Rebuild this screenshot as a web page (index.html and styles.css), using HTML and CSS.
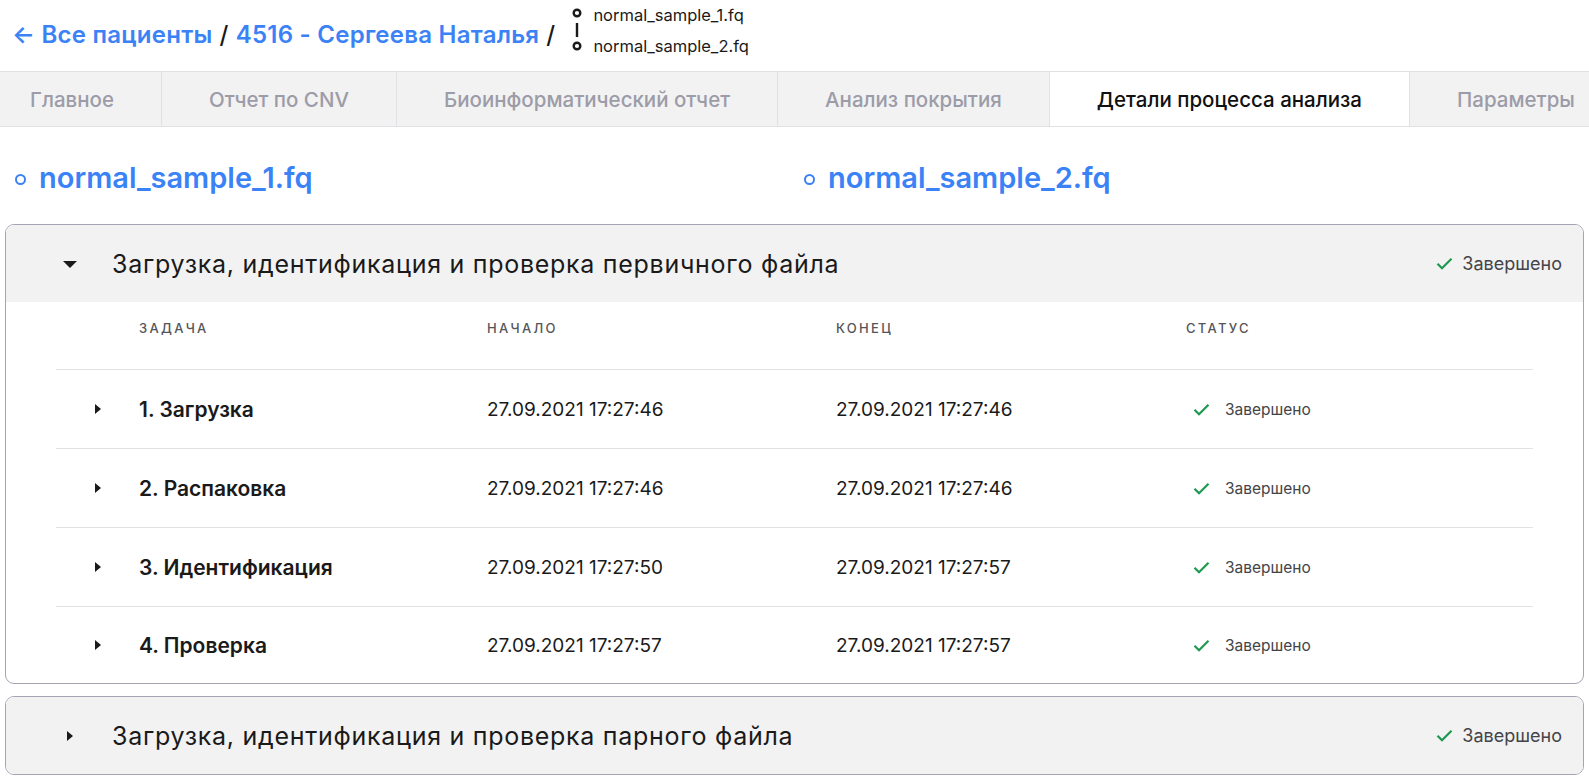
FILE: index.html
```html
<!DOCTYPE html>
<html lang="ru">
<head>
<meta charset="utf-8">
<link rel="stylesheet" href="styles.css">
</head>
<body>
<header class="topbar">
  <nav class="crumbs">
    <a class="crumb-link" href="#"><span class="arrow">←</span> Все пациенты</a>
    <span class="sep">/</span>
    <a class="crumb-link" href="#">4516 - Сергеева Наталья</a>
    <span class="sep">/</span>
  </nav>
  <div class="pair">
    <svg class="pair-icon" width="12" height="44" viewBox="0 0 12 44">
      <circle cx="6" cy="5" r="3.3" fill="none" stroke="#1a1a1a" stroke-width="2.4"/>
      <line x1="6" y1="15" x2="6" y2="29" stroke="#1a1a1a" stroke-width="2.4"/>
      <circle cx="6" cy="38" r="3.3" fill="none" stroke="#1a1a1a" stroke-width="2.4"/>
    </svg>
    <div class="pair-names">
      <span>normal_sample_1.fq</span>
      <span>normal_sample_2.fq</span>
    </div>
  </div>
</header>

<div class="tabs">
  <div class="tab first">Главное</div>
  <div class="tab">Отчет по CNV</div>
  <div class="tab">Биоинформатический отчет</div>
  <div class="tab">Анализ покрытия</div>
  <div class="tab active">Детали процесса анализа</div>
  <div class="tab">Параметры</div>
</div>

<section class="samples">
  <div class="sample"><span class="ring"></span>normal_sample_1.fq</div>
  <div class="sample"><span class="ring"></span>normal_sample_2.fq</div>
</section>

<section class="panels">
  <div class="panel">
    <div class="panel-head">
      <span class="caret-down"></span>
      <span class="panel-title">Загрузка, идентификация и проверка первичного файла</span>
      <span class="status big"><svg class="check" width="17" height="13" viewBox="0 0 17 13"><path d="M1.5 6.8l4.5 4.4L15.5 1.8" fill="none" stroke="#1f9a52" stroke-width="2.3"/></svg>Завершено</span>
    </div>
    <div class="table">
      <div class="thead">
        <div class="c-arrow"></div>
        <div class="c">Задача</div>
        <div class="c">Начало</div>
        <div class="c">Конец</div>
        <div class="c">Статус</div>
      </div>
      <div class="trow">
        <div class="c-arrow"><span class="caret-right"></span></div>
        <div class="c task">1. Загрузка</div>
        <div class="c">27.09.2021 17:27:46</div>
        <div class="c">27.09.2021 17:27:46</div>
        <div class="c status small"><svg class="check" width="17" height="13" viewBox="0 0 17 13"><path d="M1.5 6.8l4.5 4.4L15.5 1.8" fill="none" stroke="#1f9a52" stroke-width="2.3"/></svg>Завершено</div>
      </div>
      <div class="trow">
        <div class="c-arrow"><span class="caret-right"></span></div>
        <div class="c task">2. Распаковка</div>
        <div class="c">27.09.2021 17:27:46</div>
        <div class="c">27.09.2021 17:27:46</div>
        <div class="c status small"><svg class="check" width="17" height="13" viewBox="0 0 17 13"><path d="M1.5 6.8l4.5 4.4L15.5 1.8" fill="none" stroke="#1f9a52" stroke-width="2.3"/></svg>Завершено</div>
      </div>
      <div class="trow">
        <div class="c-arrow"><span class="caret-right"></span></div>
        <div class="c task">3. Идентификация</div>
        <div class="c">27.09.2021 17:27:50</div>
        <div class="c">27.09.2021 17:27:57</div>
        <div class="c status small"><svg class="check" width="17" height="13" viewBox="0 0 17 13"><path d="M1.5 6.8l4.5 4.4L15.5 1.8" fill="none" stroke="#1f9a52" stroke-width="2.3"/></svg>Завершено</div>
      </div>
      <div class="trow">
        <div class="c-arrow"><span class="caret-right"></span></div>
        <div class="c task">4. Проверка</div>
        <div class="c">27.09.2021 17:27:57</div>
        <div class="c">27.09.2021 17:27:57</div>
        <div class="c status small"><svg class="check" width="17" height="13" viewBox="0 0 17 13"><path d="M1.5 6.8l4.5 4.4L15.5 1.8" fill="none" stroke="#1f9a52" stroke-width="2.3"/></svg>Завершено</div>
      </div>
    </div>
  </div>

  <div class="panel collapsed">
    <div class="panel-head">
      <span class="caret-right head"></span>
      <span class="panel-title">Загрузка, идентификация и проверка парного файла</span>
      <span class="status big"><svg class="check" width="17" height="13" viewBox="0 0 17 13"><path d="M1.5 6.8l4.5 4.4L15.5 1.8" fill="none" stroke="#1f9a52" stroke-width="2.3"/></svg>Завершено</span>
    </div>
  </div>
</section>
</body>
</html>
```

FILE: styles.css
```css
* { box-sizing: border-box; }

html, body {
  margin: 0;
  padding: 0;
  overflow: hidden;
  background: #ffffff;
  font-family: Inter, "Noto Sans", "Liberation Sans", sans-serif;
  color: #1a1a1a;
}

.topbar {
  display: flex;
  align-items: center;
  height: 71px;
  padding-left: 12px;
  gap: 16px;
}

.crumbs {
  display: flex;
  align-items: center;
  gap: 7px;
  font-size: 24px;
  font-weight: 600;
  margin-top: -2px;
  letter-spacing: 0.25px;
}

.crumb-link {
  color: #3b82f6;
  text-decoration: none;
}

.sep { color: #1a1a1a; font-weight: 500; }

.pair {
  display: flex;
  align-items: center;
  gap: 10px;
  margin-top: -11px;
}

.pair-names {
  display: flex;
  flex-direction: column;
  gap: 11px;
  font-size: 16.5px;
  line-height: 20px;
  color: #1a1a1a;
}

.tabs {
  display: flex;
  height: 56px;
  background: #f2f2f2;
  border-top: 1px solid #e2e2e6;
  border-bottom: 1px solid #e2e2e6;
  white-space: nowrap;
  width: max-content;
}

.tab {
  display: flex;
  align-items: center;
  padding: 0 47px;
  font-size: 20.5px;
  font-weight: 500;
  color: #9c9ca8;
  border-right: 1px solid #e2e2e6;
  flex: none;
}

.tab.first { padding-left: 30px; }

.tab.active {
  background: #ffffff;
  color: #111111;
}

.samples {
  display: grid;
  grid-template-columns: 789px 1fr;
  padding: 31px 0 26px 15px;
}

.sample {
  display: flex;
  align-items: center;
  gap: 13px;
  font-size: 29px;
  font-weight: 600;
  color: #3b82f6;
  line-height: 40px;
}

.ring {
  width: 11px;
  height: 11px;
  border: 2.5px solid #3b82f6;
  border-radius: 50%;
  flex: none;
  margin-top: 2px;
}

.panels {
  display: flex;
  flex-direction: column;
  gap: 12px;
  padding: 0 5px;
}

.panel {
  border: 1px solid #a4a4b4;
  border-radius: 9px;
  overflow: hidden;
}

.panel-head {
  display: flex;
  align-items: center;
  height: 77px;
  background: #f2f2f2;
  padding: 0 21px 0 57px;
}

.caret-down {
  width: 0;
  height: 0;
  border-left: 7px solid transparent;
  border-right: 7px solid transparent;
  border-top: 7px solid #1a1a1a;
  margin-right: 35px;
  margin-top: 1px;
}

.caret-right {
  display: inline-block;
  width: 0;
  height: 0;
  border-top: 5.5px solid transparent;
  border-bottom: 5.5px solid transparent;
  border-left: 6px solid #1a1a1a;
}

.caret-right.head { margin-left: 4px; margin-right: 39px; }

.panel-title {
  font-size: 25px;
  font-weight: 400;
  color: #1a1a1a;
  flex: 1;
  letter-spacing: 0.72px;
  padding-top: 1px;
}

.status {
  display: flex;
  align-items: center;
  color: #444448;
}

.status.big { font-size: 18px; gap: 9px; }
.status.small { font-size: 15.5px; gap: 15px; }

.table {
  margin: 0 50px;
}

.thead {
  display: grid;
  grid-template-columns: 83px 348px 349px 350px 1fr;
  height: 67px;
  padding-top: 17px;
  font-size: 13px;
  letter-spacing: 2.3px;
  text-transform: uppercase;
  color: #555559;
  font-weight: 500;
  line-height: 18px;
}

.trow {
  display: grid;
  grid-template-columns: 83px 348px 349px 350px 1fr;
  align-items: center;
  height: 79px;
  border-top: 1px solid #e2e2e6;
  font-size: 19px;
  color: #1a1a1a;
}

.trow:last-child { height: 77px; }

.c-arrow {
  display: flex;
  align-items: center;
  padding-left: 39px;
}

.task {
  font-size: 21px;
  font-weight: 600;
}

.trow .status { padding-left: 7px; }
```
